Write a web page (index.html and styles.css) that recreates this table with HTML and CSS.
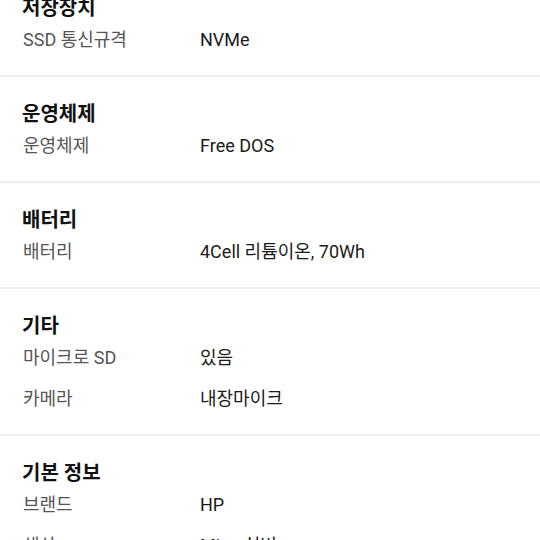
FILE: index.html
```html
<!DOCTYPE html>
<html lang="ko">
<head>
<meta charset="utf-8">
<link rel="stylesheet" href="styles.css">
</head>
<body>
<div class="list">
  <section class="group">
    <h2 class="title">저장장치</h2>
    <div class="rows">
      <div class="row"><span class="label">SSD 통신규격</span><span class="value">NVMe</span></div>
    </div>
  </section>
  <section class="group">
    <h2 class="title">운영체제</h2>
    <div class="rows">
      <div class="row"><span class="label">운영체제</span><span class="value">Free DOS</span></div>
    </div>
  </section>
  <section class="group">
    <h2 class="title">배터리</h2>
    <div class="rows">
      <div class="row"><span class="label">배터리</span><span class="value">4Cell 리튬이온, 70Wh</span></div>
    </div>
  </section>
  <section class="group">
    <h2 class="title">기타</h2>
    <div class="rows">
      <div class="row"><span class="label">마이크로 SD</span><span class="value">있음</span></div>
      <div class="row"><span class="label">카메라</span><span class="value">내장마이크</span></div>
    </div>
  </section>
  <section class="group">
    <h2 class="title">기본 정보</h2>
    <div class="rows">
      <div class="row"><span class="label">브랜드</span><span class="value">HP</span></div>
      <div class="row"><span class="label">색상</span><span class="value">Mica 실버</span></div>
    </div>
  </section>
</div>
</body>
</html>
```

FILE: styles.css
```css
html, body {
  margin: 0;
  padding: 0;
  background: #ffffff;
  overflow: hidden;
}
body {
  font-family: Roboto, "Noto Sans CJK KR", sans-serif;
  color: #111111;
}
.list {
  margin-top: -29px;
  display: flex;
  flex-direction: column;
}
.group {
  padding: 23px 22px 23px 22px;
  border-bottom: 2px solid #f0f0f0;
  display: flex;
  flex-direction: column;
  gap: 6px;
}
.title {
  margin: 0;
  font-size: 20px;
  line-height: 28px;
  font-weight: 700;
  color: #111111;
}
.rows {
  display: flex;
  flex-direction: column;
  gap: 17px;
}
.row {
  display: flex;
  font-size: 18px;
  line-height: 24px;
}
.label {
  width: 177px;
  padding-left: 1px;
  flex: none;
  color: #555555;
}
.value {
  color: #1a1a1a;
}
```
